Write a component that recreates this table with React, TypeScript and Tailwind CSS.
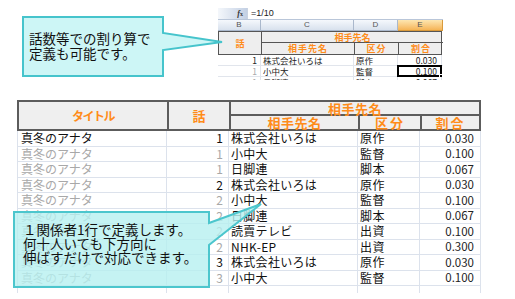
import React from "react";

const jp = "font-['Noto_Sans_CJK_JP',sans-serif]";

type Row = { n: string; nDark: boolean; name: string; kind: string; ratio: string };

const rows: Row[] = [
  { n: "1", nDark: true, name: "株式会社いろは", kind: "原作", ratio: "0.030" },
  { n: "1", nDark: false, name: "小中大", kind: "監督", ratio: "0.100" },
  { n: "1", nDark: false, name: "日脚連", kind: "脚本", ratio: "0.067" },
  { n: "2", nDark: true, name: "株式会社いろは", kind: "原作", ratio: "0.030" },
  { n: "2", nDark: false, name: "小中大", kind: "監督", ratio: "0.100" },
  { n: "2", nDark: false, name: "日脚連", kind: "脚本", ratio: "0.067" },
  { n: "2", nDark: false, name: "読賣テレビ", kind: "出資", ratio: "0.100" },
  { n: "2", nDark: false, name: "NHK-EP", kind: "出資", ratio: "0.300" },
  { n: "3", nDark: true, name: "株式会社いろは", kind: "原作", ratio: "0.030" },
  { n: "3", nDark: false, name: "小中大", kind: "監督", ratio: "0.100" },
];

// small excel capture at the top
const Snippet = () => {
  return (
    <div className={`w-[225px] h-[72px] overflow-hidden ${jp}`}>
      <div className="flex h-[12px] border-b border-[#b9c6d9]">
        <div className="w-[29px] bg-gradient-to-r from-[#f4f7fb] to-[#c3d0e4] flex items-center justify-end pr-[4px] text-[8px] leading-none italic font-bold font-['Liberation_Serif',serif] text-[#333]">
          f<span className="text-[6px] not-italic">x</span>
        </div>
        <div className="flex-1 border-l border-[#c9d3e2] bg-white pl-[3px] text-[9px] leading-[11px] text-[#222] font-['Liberation_Sans',sans-serif]">
          =1/10
        </div>
      </div>
      <div className="grid grid-cols-[43px_93px_44px_45px] h-[11px] text-[8px] leading-[10px] text-[#555] font-['Liberation_Sans',sans-serif] text-center">
        {["B", "C", "D"].map((c) => (
          <div key={c} className="border-r border-b border-[#aab8cc] bg-gradient-to-b from-[#f5f8fc] to-[#d8e1ed]">
            {c}
          </div>
        ))}
        <div className="border-r border-b border-[#d99a3c] bg-gradient-to-b from-[#fde6b0] to-[#f5b455]">E</div>
      </div>
      <div className="grid grid-cols-[43px_93px_44px_44px] grid-rows-[11px_11px] w-[224px] bg-[#eeeeee] border border-[#555] text-[9px] leading-none font-bold text-[#ff8c1a]">
        <div className="row-span-2 border-r border-[#555] flex items-center justify-center">話</div>
        <div className="col-span-3 border-b border-[#555] flex items-center justify-center">相手先名</div>
        <div className="border-r border-[#555] flex items-center justify-center tracking-[1px]">相手先名</div>
        <div className="border-r border-[#555] flex items-center justify-center tracking-[1px]">区分</div>
        <div className="flex items-center justify-center tracking-[1px]">割合</div>
      </div>
      {rows.slice(0, 3).map((r, i) => (
        <div key={i} className="grid grid-cols-[43px_93px_44px_44px] h-[11px] border-b border-[#e1e5ec] text-[8.5px] leading-[10px] text-[#222]">
          <div className={`border-r border-[#e1e5ec] text-right pr-[3px] ${r.nDark ? "text-[#222]" : "text-[#aaa]"}`}>{r.n}</div>
          <div className="border-r border-[#e1e5ec] pl-[2px]">{r.name}</div>
          <div className="border-r border-[#e1e5ec] pl-[2px]">{r.kind}</div>
          <div className="relative border-r border-[#e1e5ec] text-right pr-[4px]">
            {r.ratio}
            {i === 1 && (
              <>
                <div className="absolute -inset-[1px] border-2 border-black" />
                <div className="absolute -right-[2px] -bottom-[2px] w-[4px] h-[4px] bg-black border border-white" />
              </>
            )}
          </div>
        </div>
      ))}
    </div>
  );
};

const MainTable = () => {
  return (
    <div className={`ml-[17px] w-[464px] ${jp}`}>
      <div className="grid grid-cols-[148px_62px_129px_62px_59px] grid-rows-[14px_13px] border-2 border-[#5c5c5c] bg-[#efefef] text-[13px] leading-none font-bold text-[#ff8c1a]">
        <div className="row-span-2 flex items-center justify-center tracking-[-1.5px] text-[12px]">タイトル</div>
        <div className="row-span-2 border-l-2 border-[#5c5c5c] flex items-center justify-center">話</div>
        <div className="col-span-3 border-l-2 border-b-2 border-[#5c5c5c] flex items-center justify-center tracking-[0.5px]">相手先名</div>
        <div className="border-l-2 border-[#5c5c5c] flex items-center justify-center tracking-[0.5px]">相手先名</div>
        <div className="border-l-2 border-[#5c5c5c] flex items-center justify-center tracking-[2px]">区分</div>
        <div className="border-l-2 border-[#5c5c5c] flex items-center justify-center tracking-[2px]">割合</div>
      </div>
      {rows.map((r, i) => (
        <div key={i} className="grid grid-cols-[150px_62px_129px_62px_61px] h-[15.5px] border-b border-[#dce2ec] text-[12px] leading-none">
          <div className={`border-l border-r border-[#dce2ec] pl-[3px] flex items-center ${i === 0 ? "text-[#111]" : "text-[#a8a8a8]"}`}>真冬のアナタ</div>
          <div className={`border-r border-[#dce2ec] pr-[5px] flex items-center justify-end ${r.nDark ? "text-[#111]" : "text-[#a8a8a8]"}`}>{r.n}</div>
          <div className="border-r border-[#dce2ec] pl-[2px] flex items-center text-[#111] tracking-[0.3px]">{r.name}</div>
          <div className="border-r border-[#dce2ec] pl-[2px] flex items-center text-[#111] tracking-[0.5px]">{r.kind}</div>
          <div className="border-r border-[#dce2ec] pr-[6px] flex items-center justify-end text-[#222] text-[11.5px]">{r.ratio}</div>
        </div>
      ))}
      <div className="grid grid-cols-[150px_62px_129px_62px_61px] h-[7px]">
        <div className="border-l border-r border-[#dce2ec]" />
        <div className="border-r border-[#dce2ec]" />
        <div className="border-r border-[#dce2ec]" />
        <div className="border-r border-[#dce2ec]" />
        <div className="border-r border-[#dce2ec]" />
      </div>
    </div>
  );
};

export default function App() {
  return (
    <div className="relative w-[515px] h-[299px] overflow-hidden bg-white">
      <div className="h-[100px] pl-[218px] pt-[8px]">
        <Snippet />
      </div>
      <MainTable />

      {/* callout balloons */}
      <svg className="absolute inset-0 pointer-events-none" width="515" height="299" viewBox="0 0 515 299">
        <path d="M23 17 H163 V33 L222 42 L163 50 V76 H23 Z" fill="#cdf6f6" stroke="#46c4cc" strokeWidth="2" strokeLinejoin="miter" />
        <path d="M14 212 H209 V223 L261 204 L209 245 V287 H14 Z" fill="rgb(182,240,240)" fillOpacity="0.8" stroke="#4cc6cd" strokeWidth="2" strokeLinejoin="miter" />
      </svg>
      <div className={`absolute left-[29px] top-[31px] text-[13.5px] leading-[15px] text-[#111] ${jp}`}>
        <div>話数等での割り算で</div>
        <div>定義も可能です。</div>
      </div>
      <div className={`absolute left-[23px] top-[222px] text-[13.5px] leading-[14px] text-[#111] ${jp}`}>
        <div>１関係者1行で定義します。</div>
        <div>何十人いても下方向に</div>
        <div>伸ばすだけで対応できます。</div>
      </div>
    </div>
  );
}
